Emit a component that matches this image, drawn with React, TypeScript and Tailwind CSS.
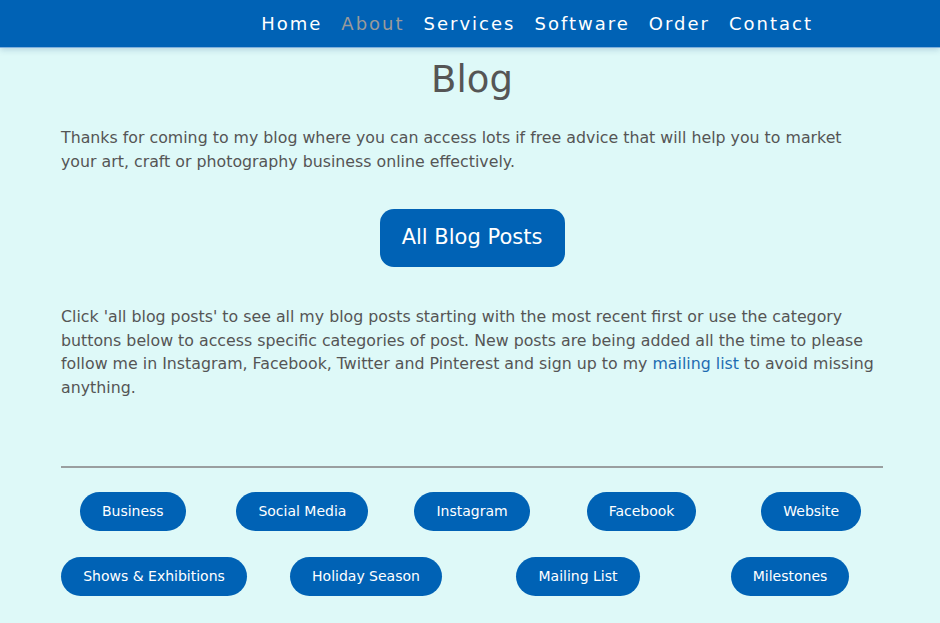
const NAV = ["Home", "About", "Services", "Software", "Order", "Contact"];

const ROW_ONE = ["Business", "Social Media", "Instagram", "Facebook", "Website"];
const ROW_TWO = ["Shows & Exhibitions", "Holiday Season", "Mailing List", "Milestones"];

function Pill({ label }: { label: string }) {
  return (
    <div className="flex justify-center">
      <a href="#" className="h-[39px] px-[22px] rounded-full bg-[#0062b5] text-white text-[14px] flex items-center">
        {label}
      </a>
    </div>
  );
}

export default function App() {
  return (
    <div className="min-h-[623px] bg-[#def9f8] text-[#555555] font-['DejaVu_Sans',Verdana,sans-serif]">
      {/* Top navigation */}
      <header className="h-[48px] bg-[#0062b5] border-b border-[#7fb0dc] shadow-[0_2px_6px_rgba(0,60,120,0.18)] flex items-center justify-end pr-[127px]">
        <nav className="flex items-center gap-[19px] text-[18px] tracking-[2px]">
          {NAV.map((item) => (
            <a key={item} href="#" className={item === "About" ? "text-[#9a9a9a]" : "text-white"}>
              {item}
            </a>
          ))}
        </nav>
      </header>

      <main className="w-[822px] ml-[61px] pt-[8px]">
        <h1 className="text-center text-[37px] leading-[48px]">Blog</h1>

        <p className="mt-[22px] pr-[6px] text-[15.8px] leading-[24px]">
          Thanks for coming to my blog where you can access lots if free advice that will help you to market your art,
          craft or photography business online effectively.
        </p>

        <div className="flex justify-center mt-[35px]">
          <a href="#" className="w-[185px] h-[58px] rounded-[14px] bg-[#0062b5] text-white text-[21px] flex items-center justify-center">
            All Blog Posts
          </a>
        </div>

        <p className="mt-[38px] pr-[6px] text-[15.8px] leading-[23.5px]">
          Click 'all blog posts' to see all my blog posts starting with the most recent first or use the category buttons
          below to access specific categories of post. New posts are being added all the time to please follow me in
          Instagram, Facebook, Twitter and Pinterest and sign up to my{" "}
          <a href="#" className="text-[#1d6cb1]">mailing list</a> to avoid missing anything.
        </p>

        <hr className="mt-[67px] border-0 h-[2px] bg-[#9a9fa0]" />

        {/* Category buttons */}
        <div className="mx-[-13px] mt-[24px] grid grid-cols-5">
          {ROW_ONE.map((c) => (
            <Pill key={c} label={c} />
          ))}
        </div>
        <div className="mx-[-13px] mt-[26px] grid grid-cols-4">
          {ROW_TWO.map((c) => (
            <Pill key={c} label={c} />
          ))}
        </div>
      </main>
    </div>
  );
}
